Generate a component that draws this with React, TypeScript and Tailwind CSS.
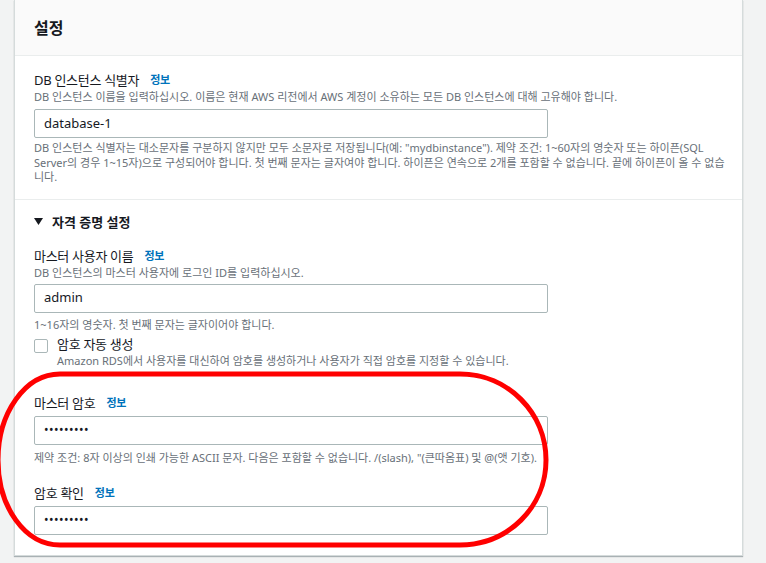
import React from "react";

const font = { fontFamily: '"Noto Sans", "Noto Sans CJK KR", sans-serif' };

const Info = () => (
    <span className="ml-[11px] text-[11px] font-bold tracking-[-0.2px] text-[#0073bb]">정보</span>
);

const TextBox = ({ value, secret }: { value: string, secret?: boolean }) => (
    <div className="mt-[4px] flex h-[29px] w-[514px] items-center rounded-[2px] border border-[#aab7b8] bg-white px-[9px]">
        {secret
            ? <span className="text-[12px] tracking-[0.5px] text-[#16191f]">•••••••••</span>
            : <span className="text-[13px] text-[#16191f]">{value}</span>}
    </div>
);

const Label = ({ children }: { children: React.ReactNode }) => (
    <div className="flex items-center text-[13px] leading-[18px] tracking-[-0.3px] text-[#16191f]">
        {children}
        <Info />
    </div>
);

const Hint = ({ children, className }: { children: React.ReactNode, className?: string }) => (
    <p className={`text-[11px] text-[#687078] ${className ?? ""}`}>{children}</p>
);

export default function App() {
    return (
        <div style={font} className="relative h-[563px] w-full overflow-hidden bg-[#f2f3f3] pl-[14px]">
            <div className="w-[729px] border-x border-b border-[#d5dbdb] bg-white shadow-[0_1px_1px_0_rgba(0,28,36,0.3)]">
                <div className="flex h-[56px] items-center border-b border-[#eaeded] bg-[#fafafa] px-[19px]">
                    <h2 className="text-[16px] font-bold text-[#16191f]">설정</h2>
                </div>

                <div className="border-b border-[#eaeded] px-[19px] pt-[15px] pb-[14px]">
                    <Label>DB 인스턴스 식별자</Label>
                    <Hint className="leading-[16px]">
                        DB 인스턴스 이름을 입력하십시오. 이름은 현재 AWS 리전에서 AWS 계정이 소유하는 모든 DB 인스턴스에 대해 고유해야 합니다.
                    </Hint>
                    <TextBox value="database-1" />
                    <Hint className="mt-[3px] w-[698px] leading-[14.5px]">
                        DB 인스턴스 식별자는 대소문자를 구분하지 않지만 모두 소문자로 저장됩니다(예: "mydbinstance"). 제약 조건: 1~60자의 영숫자 또는 하이픈(SQL Server의 경우 1~15자)으로 구성되어야 합니다. 첫 번째 문자는 글자여야 합니다. 하이픈은 연속으로 2개를 포함할 수 없습니다. 끝에 하이픈이 올 수 없습니다.
                    </Hint>
                </div>

                <div className="px-[19px] pt-[12px] pb-[20px]">
                    <div className="flex items-center text-[13px] font-bold leading-[20px] text-[#16191f]">
                        <svg width="9" height="7" viewBox="0 0 9 7" className="mr-[9px]">
                            <path d="M0 0 L9 0 L4.5 7 Z" fill="#16191f" />
                        </svg>
                        자격 증명 설정
                    </div>

                    <div className="mt-[15px]">
                        <Label>마스터 사용자 이름</Label>
                        <Hint className="leading-[16px]">DB 인스턴스의 마스터 사용자에 로그인 ID를 입력하십시오.</Hint>
                        <div className="-mt-[1px]" />
                        <TextBox value="admin" />
                        <Hint className="mt-[5px] leading-[14px]">1~16자의 영숫자. 첫 번째 문자는 글자이어야 합니다.</Hint>
                    </div>

                    <div className="mt-[3px] flex">
                        <div className="mt-[4px] h-[14px] w-[14px] rounded-[2px] border border-[#aab7b8] bg-white" />
                        <div className="ml-[9px]">
                            <div className="text-[13px] leading-[18px] tracking-[-0.3px] text-[#16191f]">암호 자동 생성</div>
                            <Hint className="leading-[16px]">Amazon RDS에서 사용자를 대신하여 암호를 생성하거나 사용자가 직접 암호를 지정할 수 있습니다.</Hint>
                        </div>
                    </div>

                    <div className="mt-[25px]">
                        <Label>마스터 암호</Label>
                        <div className="mt-[4px]" />
                        <TextBox value="" secret />
                        <Hint className="mt-[6px] leading-[14px]">제약 조건: 8자 이상의 인쇄 가능한 ASCII 문자. 다음은 포함할 수 없습니다. /(slash), "(큰따옴표) 및 @(앳 기호).</Hint>
                    </div>

                    <div className="mt-[19px]">
                        <Label>암호 확인</Label>
                        <div className="mt-[3px]" />
                        <TextBox value="" secret />
                    </div>
                </div>
            </div>

            <svg className="pointer-events-none absolute left-0 top-0" width="766" height="563">
                <path
                    d="M 60 374 L 460 374 C 508 374 546 413 546 460 C 546 507 508 545 460 545 L 60 545 C 25 545 -2 507 -2 460 C -2 413 25 374 60 374 Z"
                    fill="none"
                    stroke="#ff0000"
                    strokeWidth="5"
                />
            </svg>
        </div>
    );
}
